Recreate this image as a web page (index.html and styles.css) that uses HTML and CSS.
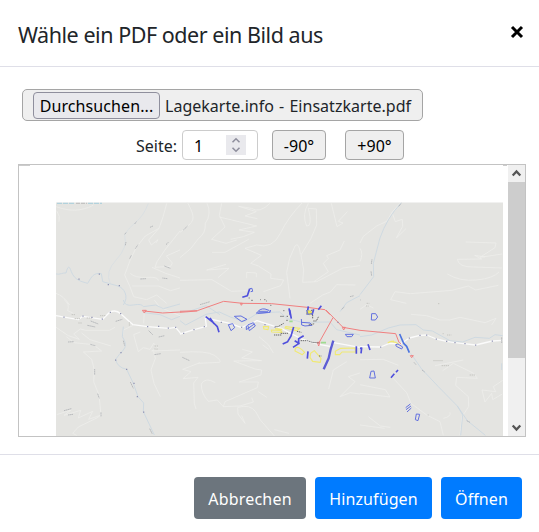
FILE: index.html
```html
<!DOCTYPE html>
<html lang="de">
<head>
<meta charset="utf-8">
<title>PDF oder Bild</title>
<link rel="stylesheet" href="styles.css">
</head>
<body>
<div class="modal">
  <header class="modal-header">
    <h1 class="title">Wähle ein PDF oder ein Bild aus</h1>
    <button class="close" aria-label="Schließen"><svg width="14" height="14" viewBox="0 0 14 14"><path d="M2 2 12 12M12 2 2 12"/></svg></button>
  </header>
  <main class="modal-body">
    <div class="file"><button class="browse"><span class="t-browse">Durchsuchen...</span></button><span class="filename">Lagekarte.info - Einsatzkarte.pdf</span></div>
    <div class="controls">
      <span class="label">Seite:</span>
      <div class="number"><span>1</span><svg class="spin" width="20" height="20" viewBox="0 0 20 20"><path d="m6.5 7.2 3.5-3.4 3.5 3.4M6.5 12.8l3.5 3.4 3.5-3.4"/></svg></div>
      <button class="rotate minus">-90°</button>
      <button class="rotate plus">+90°</button>
    </div>
    <div class="preview">
      <div class="page">
        <div class="marks"><i></i><i></i></div>
        <svg class="map" width="447" height="234" viewBox="56 202 447 234">
          <rect x="56" y="202.5" width="447" height="234" fill="#e4e4e1"/>
          <path d="M57 203.3H75M88 203.3H102" stroke="#a5cedb" stroke-dasharray="5 1"/>
          <path d="M76 203.3H87" stroke="#bbb" stroke-dasharray="4 1"/>
          <!-- north west -->
          <g transform="translate(0 160) scale(.33333)" class="line">
            <g class="road"><path d="M168 140Q210 155 240 149T280 135M170 152Q182 170 177 185M500 130Q491 170 477 205L436 228L409 262L391 299L374 345L390 380L401 410L440 419L470 405L500 430M477 205L446 240L454 255L474 239L468 249M540 213L497 267L471 305L465 322L512 319L517 309L499 288L540 270M391 340Q404 354 440 352T475 362M397 378L475 378L512 392L540 384M456 322L497 340L540 354M168 400Q190 407 209 435"/></g>
            <g class="stream"><path d="M168 342C180 345 190 337 198 339C203 319 207 314 214 335C224 361 243 364 263 370C275 350 281 337 304 341L308 365L354 378C372 384 388 409 370 435"/></g>
            <path class="stream faint" d="M445 130Q432 166 406 188T374 226Q384 262 349 299T331 370"/>
            <path class="name" d="m404 192 5-7m-35 38 5-6m-3 39 2-10m28 20 8-12m-25 42 5-10m104-32 7-7m-55-45 9-4m34 120 18 7m-90 32 18-1m63 0-15-2"/>
            <path class="dots" d="M237 357v.1M298 342v.1M325 374v.1M358 377v.1"/>
          </g>
          <!-- north -->
          <g transform="translate(180 195) scale(.33333)" class="line">
            <g class="road"><path d="M22 22Q44 60 38 75T0 112M81 25Q96 56 76 85Q78 115 55 131L33 160L0 188M125 25L118 61L135 96L95 133L138 145L170 135M118 66L230 93L177 105L223 112L190 125L152 133M96 172L135 172L206 133M270 25Q239 56 214 40L176 34L229 50L195 63L232 71M368 22Q324 67 301 115T230 150L195 160L244 181L212 205L235 213L273 237L272 250L311 255L302 272L250 290M138 208L80 225L147 220L114 248M0 256L96 254L154 289L200 287M200 250V232L229 234V247M385 25Q365 60 380 93Q399 96 385 40L409 42L410 90L393 130L363 180L371 225L368 262L410 260L489 219L540 212M361 178Q357 139 345 153L329 190L320 232L330 310M454 25L471 95L489 84L475 79L502 50M493 138L480 165L440 182L445 190L430 205L445 230L402 260M390 325L428 300L451 291L470 269L526 270"/></g>
            <path class="stream" d="M0 348L24 350L78 332L120 359M480 350L500 323L540 302"/>
            <path class="name" d="m60 329 30-9m-80-215 13-12m462 250 8-7m17-31 12-3"/>
            <path class="red" d="M0 349L52 347L131 319L188 325L275 326L382 337L435 344L450 359M181 325l3 6 4-6z"/>
            <path class="blue heavy" d="M187 307L202 302L209 281M327 340L331 360M385 334L381 359M401 343L396 360M415 344L424 332"/>
            <path class="blue" d="M209 281l7-1 2 9-6 1M229 356Q239 339 255 342T271 352L229 356M236 349H264"/>
            <path class="yellowfill" d="m385 349 10 4-7 7-9-6z"/>
            <path class="black" d="M206 309h3m5 7h4m23-2h2m10 0h3m2 4h2m11 13h3m36 16h3m80-1h5"/>
          </g>
          <!-- north east -->
          <g transform="translate(360 160) scale(.33333)" class="line">
            <g class="road"><path d="M0 249L10 229L50 198L80 184L96 157L120 130M96 157L106 185L127 178L128 199L109 234L138 206M0 265Q11 280 0 305M317 246L408 249L405 263L360 292L427 282M375 291L344 286L365 297L292 298Q296 322 341 321L426 324M262 342Q300 365 350 360T417 336M139 430L92 419L105 395L151 401L276 391L325 378L347 390L415 376"/></g>
            <path class="stream" d="M124 128Q80 175 60 234L40 310L41 350L0 404"/>
            <path class="name" d="m116 139 7-8M34 312l2-14m-3 36 2 14M0 420h2"/>
          </g>
          <!-- south west -->
          <g transform="translate(0 300) scale(.33333)" class="line">
            <g class="road major"><path d="M168 47L235 59L248 49L308 58L329 37Q347 27 362 41L399 74L443 80L506 85L527 82L541 99"/></g>
            <g class="road"><path d="M168 82L205 107L238 118L221 102L241 87L257 91L328 91L345 82M193 0Q210 11 203 32L220 40M245 99L270 119L333 138M199 110L222 128L280 134L305 153L250 156L275 178L283 210L281 245L297 285L303 345L290 354L235 381L218 400L230 406M170 344L213 330L192 346L242 331L235 354L278 334L266 358L304 345M433 31L431 70M400 76L370 90L368 105M421 96L401 104L415 155L430 143L450 148L461 130L474 143L455 153L540 150M461 155L466 175L453 210L462 250L481 290M463 0L480 22L540 47"/></g>
            <path class="stream" d="M370 0Q374 20 400 15T430 20L467 15L490 26L540 12M430 38L480 44L515 59L540 49M370 80L367 110Q384 135 370 150T347 178Q351 202 380 208L400 250L414 290L431 309L430 335L463 405"/>
            <path class="name" d="m192 332 22-6m-10 19 15-2m-15-217 17-1m50 8 15 4m-2 70v17m9 57 5 14m5 42v13m67-228 4 15m17 109 9 19m49 121 8 16m6-238 20-3m-211-98 23 9m-33 4 24 5m61-17 20-6m79 34 13 13m17 6 18-4m53 65 22 10"/>
            <path class="black pale" d="M215 44h12m-3 12h18m18-2h17m23-7h17m-82 22h12m141-2v12m76 59h12m-13 9h10"/>
            <path class="dots" d="M192 51v.1M249 48v.1M276 52v.1M307 57v.1M331 37v.1M362 41v.1M443 80v.1M476 79v.1M505 84v.1M527 82v.1M363 158v.1M347 180v.1M380 208v.1M402 250v.1M412 290v.1M431 336v.1"/>
            <path class="red" d="M432 33L488 39L541 36M427 31h12l-6 8z"/>
          </g>
          <!-- south -->
          <g transform="translate(180 310) scale(.33333)" class="line">
            <g class="road major"><path d="M0 72L42 59L79 49L76 24L150 40L185 53L231 32L305 56L365 87L416 103L450 109L461 98L540 112"/></g>
            <g class="road"><path d="M0 127Q81 121 103 136T119 157L54 160M237 80L265 104L280 129M248 105L266 118M187 118L217 126L185 144L245 152L161 153L225 177L245 180L243 195L178 216L235 216L232 233L135 275L130 290L112 270L85 274Q63 250 64 222Q76 200 106 218M60 158L8 178L33 185L9 206L54 202L41 219L43 280L48 297M130 290L180 288L220 276L215 263M173 292L174 312L195 340L185 317M174 292Q210 282 227 305L241 330L285 380M283 359L327 370M235 245L260 262M500 155L460 180L446 237M540 189L505 200L525 215L480 260L511 248L540 252"/></g>
            <path class="stream" d="M0 32L17 45L78 13L118 6L151 21L193 35L235 8L299 6L322 26L367 37L450 36L470 59L540 75"/>
            <path class="red" d="M0 7L52 3M438 0L489 52L540 61M459 23L416 100M412 97h8l-4 11zM487 52h9l-5 8z"/>
            <path class="yellow" d="M250 50L266 50L264 59L252 57ZM274 60L302 61L306 67L275 66ZM285 56L307 58M317 50L360 55L350 62L315 54ZM346 115Q354 106 374 127L367 134L345 123ZM392 130L403 122L423 145L421 157L398 154L390 142ZM466 124L482 115L525 114L527 126L486 126L479 134H466Z"/>
            <path class="blue heavy" d="M77 20L98 36L112 50L117 67M90 24L102 41M329 0L334 26M341 51L333 78L323 95L308 102M371 77L356 86V101L339 112M344 92L359 101"/>
            <path class="blue heaviest" d="M460 92L452 118L446 145L431 178"/>
            <path class="blue heavy" d="M384 124L382 146M529 109L529 131"/>
            <path class="blue" d="M145 44L158 41L164 53L153 62ZM163 19L183 18L201 28L185 35ZM203 45L220 38L226 48L208 62ZM199 47V59L223 42M229 9L270 7L272 0M364 27L365 45L375 48L396 46L390 39L365 37M496 73L520 73L515 80H501Z"/>
            <path class="black" d="M362 92h20l15 5 20 2M286 50h8l17-10m-10-21h10m9 0h4m-5 12h5m76 2h9l7-14m-18-4v10m-12 20 18-4m13 97h7m-142-63h23M302 70h23m26-6 13 3"/>
            <path class="green" d="M423 98h15M328 34h10"/>
            <path class="yellowfill" d="m381 2 12 1 2 9-8 2z"/>
            <path class="blue" d="m380 0 4 13 15-3"/>
            <path class="dots" d="M11 70v.1M42 59v.1M73 50v.1M124 37v.1M185 52v.1M255 44v.1M285 51v.1M474 37v.1"/>
          </g>
          <!-- south east -->
          <g transform="translate(360 300) scale(.33333)" class="line">
            <g class="road major"><path d="M0 140L62 141L88 130L121 132L148 114L180 106L200 105L229 117L260 124L285 128L347 135L397 123L427 121"/></g>
            <g class="road"><path d="M0 28L20 14L40 24M153 43L200 47L240 60L270 60L300 52L375 68L408 55L395 75M0 179L70 178L115 196M95 230L140 278L153 310L200 345L240 365L250 406M0 254L76 269L90 291L0 280M0 375L74 385M25 350L61 378L91 382M225 197L310 180M248 212L280 190L341 220L352 235L290 232L287 256L325 290L326 320L306 350L300 406M428 241L400 260L407 275L366 270L375 306L395 280L398 299L427 282M250 355Q274 350 270 337"/></g>
            <path class="stream" d="M0 110L35 105L85 84L120 75L168 74L190 90L217 93L270 122L308 126L345 112L388 115L405 104L428 107M152 160L185 207L235 260L292 318L322 362L376 406M292 318L308 345L302 406M425 190v20"/>
            <path class="red" d="M0 91L107 101L117 127L123 132M151 167h9l-5 6z"/>
            <path class="yellow" d="M83 129L94 124L107 127L116 133M86 126L102 123"/>
            <path class="skyblue" d="M119 102L131 130L140 139L148 158"/>
            <path class="blue" d="M35 41L47 41L53 51L46 60L34 60ZM107 134L114 132L128 141L125 147L109 139ZM33 214L42 213L46 234L29 234ZM169 342L179 343L174 362L166 359ZM137 323L151 312M138 329L153 318M141 336L154 324"/>
            <path class="blue heavy" d="M0 145L5 144L3 160M24 133L30 150M93 233L103 221M108 217L114 210"/>
            <path class="black pale" d="M220 182h28m-3 15h22m62 28h16M20 10h8m-10 8h8m208-7h5m9 90h3m10 4h13M203 345h3"/>
            <path class="dots" d="M62 141v.1M148 114v.1M180 106v.1M200 105v.1M229 117v.1M260 124v.1M285 128v.1M315 131v.1M347 135v.1M397 123v.1"/>
            <path class="name" d="m162 187 6 7m18 16 8 6m126 146 10 5m95-255v17"/>
          </g>
        </svg>
      </div>
      <div class="scroll"><svg class="up" width="17" height="17" viewBox="0 0 17 17"><path d="m4.7 10.5 3.8-4 3.8 4"/></svg><div class="thumb"></div><svg class="down" width="17" height="17" viewBox="0 0 17 17"><path d="m4.7 6.5 3.8 4 3.8-4"/></svg></div>
    </div>
  </main>
  <footer class="modal-footer">
    <button class="btn cancel">Abbrechen</button>
    <button class="btn add">Hinzufügen</button>
    <button class="btn open">Öffnen</button>
  </footer>
</div>
</body>
</html>
```
FILE: styles.css
```css
* { box-sizing: border-box; }
body { margin: 0; background: #fff; color: #212529; font: 16px/24px "Noto Sans", "Open Sans", sans-serif; overflow: hidden; }
button { font: inherit; padding: 0; margin: 0; white-space: nowrap; }
.modal { width: 539px; height: 532px; display: flex; flex-direction: column; }
.modal-header { height: 67px; border-bottom: 1px solid #dfdfe8; padding: 0 15px 0 18px; display: flex; justify-content: space-between; align-items: flex-start; }
.title { margin: 19px 0 0; font-size: 21.5px; line-height: 31px; font-weight: 400; letter-spacing: -.46px; white-space: nowrap; }
.close { border: 0; background: none; margin-top: 25px; height: 14px; width: 14px; }
.close svg { display: block; }
.close path { fill: none; stroke: #000; stroke-width: 3; }
.modal-body { height: 387px; padding: 22px 13px 0 18px; }
.file { margin-left: 4px; width: 401px; height: 32px; border: 1px solid #a5a5a5; border-radius: 5px; background: #efefef; display: flex; align-items: center; padding-left: 10px; white-space: nowrap; }
.browse { width: 127px; height: 27px; border: 1px solid #8f8f9d; border-radius: 4px; background: #e9e9ed; color: #000; line-height: 26px; }
.t-browse { letter-spacing: .1px; }
.filename { margin-left: 5px; letter-spacing: .02px; word-spacing: 1px; line-height: 26px; padding-top: 1px; }
.controls { display: flex; height: 30px; margin: 9px 0 4px 118px; }
.label { width: 46px; line-height: 32px; letter-spacing: 0; white-space: nowrap; }
.number { width: 76px; height: 30px; border: 1px solid #ccc; border-radius: 4px; color: #000; display: flex; justify-content: space-between; align-items: center; padding: 0 11px 0 11px; }
.spin { background: #e9e9ed; }
.spin path { fill: none; stroke: #8f8f9d; stroke-width: 1.6; }
.number span { padding-top: 1px; }
.rotate { height: 30px; border: 1px solid #a5a5a5; border-radius: 4px; background: #efefef; color: #000; padding-top: 1px; }
.minus { width: 54px; margin-left: 14px; letter-spacing: 0; }
.plus { width: 59px; margin-left: 19px; letter-spacing: 0; }
.preview { width: 508px; height: 273px; border: 1px solid #c3c3c3; display: flex; overflow: hidden; }
.page { flex: 1; }
.marks { height: 37px; display: flex; justify-content: space-between; }
.marks i { width: 11px; height: 1px; background: #ccc; }
.marks i + i { width: 4px; margin-right: 1px; }
.map { display: block; margin-left: 37px; }
.scroll { width: 17px; background: #f0f0f0; display: flex; flex-direction: column; }
.scroll svg { display: block; flex: none; }
.scroll path { fill: none; stroke: #555; stroke-width: 2.3; }
.thumb { height: 176px; background: #cdcdcd; margin-bottom: 61px; flex: none; }
.modal-footer { height: 78px; border-top: 1px solid #dfdfe8; padding: 22px 17px 0 0; display: flex; justify-content: flex-end; gap: 9px; }
.btn { height: 42px; border: 0; border-radius: 4px; color: #fff; background: #007bff; line-height: 42px; padding-top: 1px; }
.cancel { width: 112px; background: #6c757d; letter-spacing: .2px; }
.add { width: 117px; letter-spacing: .1px; }
.open { width: 81px; letter-spacing: .1px; }
.line path { fill: none; stroke-linejoin: round; stroke-width: 2; }
.line .road path { stroke: #eeeeec; stroke-width: 2.3; }
.line .major path { stroke: #fbfbfb; stroke-width: 4; }
.line .stream, .line .stream path { stroke: #ccd8e1; stroke-width: 2.7; }
.line .faint { stroke: #d9dfe2; }
.line .name { stroke: #aeb1b5; stroke-width: 2.5; stroke-dasharray: 5 1; }
.line .dots { stroke: #8a8db0; stroke-width: 3.6; stroke-linecap: square; }
.line .red { stroke: #f07f7f; stroke-width: 3; }
.line .blue { stroke: #6270df; stroke-width: 3; }
.line .heavy { stroke: #5050dc; stroke-width: 5; }
.line .heaviest { stroke: #5d5dd4; stroke-width: 7; }
.line .skyblue { stroke: #4d75df; stroke-width: 5; }
.line .yellow { stroke: #f0e974; stroke-width: 3.4; }
.line .yellowfill { fill: #f3ed52; stroke: #d4cb48; }
.line .black { stroke: #666; stroke-width: 3; stroke-dasharray: 4 2; }
.line .pale { stroke: #c5c5c0; }
.line .green { stroke: #9fdb91; stroke-width: 5; }
```
